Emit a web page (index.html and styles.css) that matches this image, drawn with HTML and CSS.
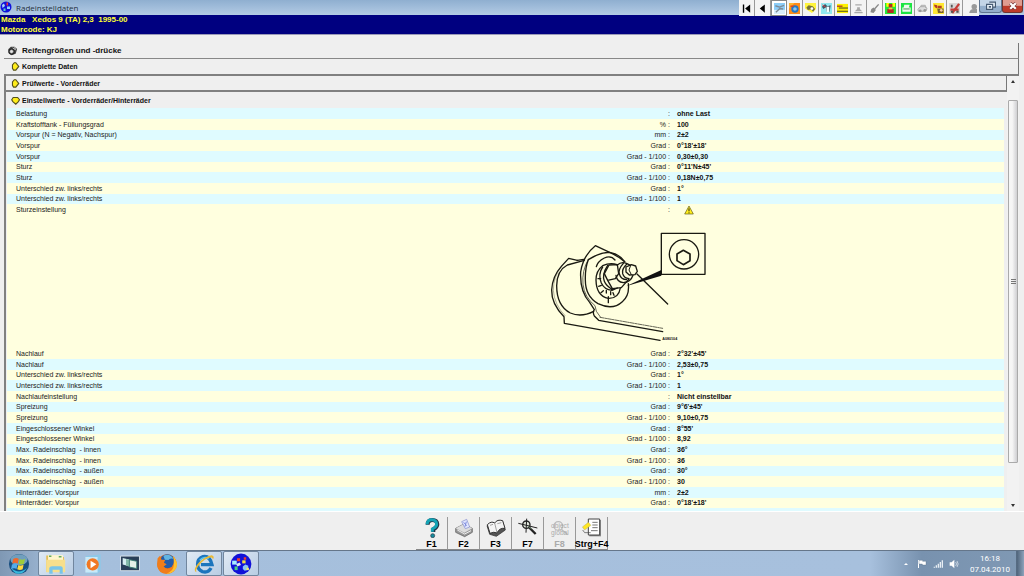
FILE: index.html
```html
<!DOCTYPE html>
<html lang="de">
<head>
<meta charset="utf-8">
<title>Radeinstelldaten</title>
<link rel="stylesheet" href="styles.css">
</head>
<body>
<div class="app">
<header class="titlebar">
  <svg class="appicon" viewBox="0 0 24 24"><circle cx="12" cy="12" r="11" fill="#1010dc"/><path d="M4 8l4-3 2 5-5 4z" fill="#a8d8f8"/><path d="M13 3h3v6h-3z" fill="#e33"/><path d="M14 11h6v5h-6z" fill="#8bd0ff"/><path d="M7 15h4v5h-4z" fill="#58d4c0"/></svg>
  <h1 class="title">Radeinstelldaten</h1>
  <nav class="tools" aria-label="Werkzeuge">
    <button class="tool" aria-label="Erste"><svg viewBox="0 0 24 24"><path d="M4 3h3v18H4zM20 3v18L9 12z" fill="#000"/></svg></button>
    <button class="tool" aria-label="Zurück"><svg viewBox="0 0 24 24"><path d="M17 3v18L6 12z" fill="#000"/></svg></button>
    <button class="tool tool-on" aria-label="Radeinstellung"><svg viewBox="0 0 24 24"><rect width="24" height="24" fill="#8ccdf8"/><path d="M0 15h24v9H0z" fill="#d9eefb"/><path d="M3 6l9 3 10-4M4 20l9-8 7 1" stroke="#7f8b96" stroke-width="3" fill="none"/></svg></button>
    <button class="tool" aria-label="Motor"><svg viewBox="0 0 24 24"><rect width="24" height="24" fill="#ff8b18"/><path d="M0 0h12L0 12z" fill="#ffb52f"/><circle cx="13" cy="13" r="8" fill="#2377c5"/><circle cx="13" cy="13" r="4" fill="#8fc5ef"/><path d="M3 7h7" stroke="#e43c16" stroke-width="3"/></svg></button>
    <button class="tool" aria-label="Fahrzeug"><svg viewBox="0 0 24 24"><path d="M0 0h24v13l-9 9L0 12z" fill="#fff43c"/><path d="M3 10l5-5 9 2 5 6-4 6-5-5-7 1z" fill="#77733c"/><circle cx="15" cy="12" r="3" fill="#fff"/></svg></button>
    <button class="tool" aria-label="Diagnose"><svg viewBox="0 0 24 24"><rect width="24" height="24" fill="#91e7ef"/><path d="M2 8l7-6 5 5 7-2-2 14h-7l-1-10-6 4z" fill="#3e5968"/><path d="M12 8h6v12h-6z" fill="#f2ffff"/><path d="M3 4l7 5" stroke="#e33" stroke-width="2"/></svg></button>
    <button class="tool" aria-label="Werte"><svg viewBox="0 0 24 24"><rect y="2" width="24" height="20" fill="#fff100"/><path d="M0 7h12" stroke="#b42" stroke-width="3"/><path d="M4 11h20M0 18h24" stroke="#38382c" stroke-width="2"/></svg></button>
    <button class="tool" aria-label="Hebebühne" disabled><svg viewBox="0 0 24 24"><path d="M5 4h14M3 21h18" stroke="#aaa" stroke-width="3"/><path d="M9 9h6v4l5 5H4l5-5z" fill="#aaa"/></svg></button>
    <button class="tool" aria-label="Wartung" disabled><svg viewBox="0 0 24 24"><path d="M21 3L12 13" stroke="#888" stroke-width="3"/><path d="M5 13l5-3 5 5-5 7-7-2z" fill="#888"/></svg></button>
    <button class="tool" aria-label="Elektrik"><svg viewBox="0 0 24 24"><rect width="24" height="24" fill="#25e83a"/><path d="M3 0h6v8H3zM16 0h6v8h-6z" fill="#ff0"/><path d="M8 2h8v8H8zM5 13h14v9H5z" fill="#b52b20"/><path d="M8 10h8v4H8z" fill="#fb4"/></svg></button>
    <button class="tool" aria-label="Drucken"><svg viewBox="0 0 24 24"><rect width="24" height="24" fill="#1ce542"/><path d="M7 4h12l-2 6h4v9H3v-9h3z" fill="#eefaee"/><path d="M5 13h14" stroke="#3c8a4c" stroke-width="2"/></svg></button>
    <button class="tool" aria-label="Auto" disabled><svg viewBox="0 0 24 24"><path d="M2 14l5-6h10l5 4-3 6H3zM8 9l1-4h9l2 6" stroke="#aaa" stroke-width="2" fill="#ddd"/><circle cx="7" cy="17" r="3" fill="#999"/><circle cx="17" cy="16" r="3" fill="#999"/></svg></button>
    <button class="tool" aria-label="Klima"><svg viewBox="0 0 24 24"><rect width="24" height="24" fill="#ffe832"/><path d="M2 3l7 2v7l-5-3zM10 6h9v5h-9z" fill="#b43d24"/><path d="M9 12h14v10H11z" fill="#78602b"/><circle cx="18" cy="16" r="3" fill="#f8cda5"/></svg></button>
    <button class="tool" aria-label="Karosserie"><svg viewBox="0 0 24 24"><rect width="24" height="24" fill="#d8d8d8"/><path d="M3 12h18v5H3z" fill="#c63c37"/><path d="M7 22L22 2" stroke="#c63c37" stroke-width="5"/><path d="M4 19h5M16 19h5M6 4v6" stroke="#555" stroke-width="4"/></svg></button>
    <button class="tool" aria-label="Benutzer" disabled><svg viewBox="0 0 24 24"><circle cx="18" cy="8" r="6" fill="#999"/><path d="M7 22q2-10 11-9h6v9z" fill="#999"/></svg></button>
  </nav>
  <button class="restore" aria-label="Wiederherstellen"><svg viewBox="0 0 24 18"><path d="M9 2h11v9h-5M4 6h11v9H4z" fill="#e9f1f9" stroke="#465a72" stroke-width="2"/><path d="M8 9h4v3H8z" fill="#465a72"/></svg></button>
  <button class="close" aria-label="Schließen"><svg viewBox="0 0 24 18"><path d="M7 4l10 10M17 4L7 14" stroke="#703030" stroke-width="6"/><path d="M7 4l10 10M17 4L7 14" stroke="#fff" stroke-width="4"/></svg></button>
</header>
<div class="vehicle"><p>Mazda &nbsp; Xedos 9 (TA) 2,3 &nbsp;1995-00</p><p>Motorcode: KJ</p></div>
<main class="main">
  <button class="section section-tyres"><svg class="mark" viewBox="0 0 27 27"><path d="M2 9l7-7h10l7 6-4 13-11 4-8-6z" fill="#444"/><circle cx="11" cy="15" r="7" fill="#aaa" stroke="#222" stroke-width="3"/><path d="M11 11v8M7 15h8M14 5l7 5M19 3l3 7" stroke="#eee" stroke-width="2"/></svg>Reifengrößen und -drücke</button>
  <button class="section section-deep"><svg class="mark" viewBox="0 0 27 27"><path class="gem" d="M13 2h4l8 10-8 10h-6l-3-5V8z"/></svg>Komplette Daten</button>
  <div class="scroller">
    <div class="sheet">
      <button class="section section-deep section-first"><svg class="mark" viewBox="0 0 27 27"><path class="gem" d="M13 2h4l8 10-8 10h-6l-3-5V8z"/></svg>Prüfwerte - Vorderräder</button>
      <button class="section section-open" aria-expanded="true"><svg class="mark" viewBox="0 0 27 27"><path class="gem" d="M10 4h12l5 6-3 5-7 7-8-7-3-5z"/></svg>Einstellwerte - Vorderräder/Hinterräder</button>
      <table class="data">
        <colgroup><col class="c-name"><col class="c-unit"><col></colgroup>
        <tbody>
          <tr><td>Belastung</td><td>:</td><td>ohne Last</td></tr>
          <tr><td>Kraftstofftank - Füllungsgrad</td><td>% :</td><td>100</td></tr>
          <tr><td>Vorspur (N = Negativ, Nachspur)</td><td>mm :</td><td>2±2</td></tr>
          <tr><td>Vorspur</td><td>Grad :</td><td>0°18'±18'</td></tr>
          <tr><td>Vorspur</td><td>Grad - 1/100 :</td><td>0,30±0,30</td></tr>
          <tr><td>Sturz</td><td>Grad :</td><td>0°11'N±45'</td></tr>
          <tr><td>Sturz</td><td>Grad - 1/100 :</td><td>0,18N±0,75</td></tr>
          <tr><td>Unterschied zw. links/rechts</td><td>Grad :</td><td>1°</td></tr>
          <tr><td>Unterschied zw. links/rechts</td><td>Grad - 1/100 :</td><td>1</td></tr>
          <tr><td>Sturzeinstellung</td><td>:</td><td><svg class="warn" viewBox="0 0 30 30"><path d="M15 3l13 24H2z" fill="#ffee19" stroke="#5c5718" stroke-width="2"/><path d="M15 10v9M15 22v3" stroke="#222" stroke-width="3"/></svg></td></tr>
        </tbody>
        <tbody class="figure"><tr><td colspan="3">
          <svg class="drawing" viewBox="0 60 540 384" role="img" aria-label="Sturzeinstellung Exzenter">
            <g fill="none" stroke="#1a1a12" stroke-width="4" stroke-linejoin="round" stroke-linecap="round">
              <rect x="364" y="100" width="131" height="123"/>
              <circle cx="432" cy="163" r="44"/>
              <path d="M430 151l20 11v20l-20 12-19-12v-20z" stroke-width="5"/>
              <path d="M112 181L86 175 64 199Q37 229 35 270q-1 42 37 80l1 20 287 51"/>
              <path d="M133 181l-51 14q-31 16-32 62 0 60 41 82 33 14 70-5"/>
              <path d="M65 199q-25 30-25 72 3 43 35 76" stroke-width="1"/>
              <path d="M112 181l19-3"/>
              <path d="M254 185q-20-17-45-28l-43-20q-37 30-44 79-3 58 27 91l14 22q-6 8 0 19l13 13 192 34"/>
              <path d="M145 178q-20 35-16 75 4 38 36 64 0 17 16 34" stroke-width="2"/>
              <path d="M180 352l188 33" stroke-width="2" stroke-dasharray="12 3 5 3"/>
              <path d="M145 179q33-22 64-22 29 5 45 28M145 179q-10 25-9 61 0 49 38 71 44 21 73-6 22-18 18-54"/>
              <path d="M225 180q-12-15-32-6-20 10-24 26"/>
              <path d="M231 194q-20-7-43 3-20 15-20 43 1 48 37 55 31 1 36-31"/>
              <path d="M188 201q-15 22-4 48 9 20 32 22l16-7M203 196q-18 28-10 48 6 15 25 25"/>
              <path d="M207 195l25-1 4 27-10 15-23 5-10-20zM203 241l14 25 27-3 22-25"/>
              <path d="M232 195q13-12 29-4l10 5M228 226q3 20 22 22 22-1 29-22"/>
              <path d="M250 190q-16 18-12 32 5 17 22 17M260 193q-15 14-12 28 4 14 19 15M258 201l16-7 13 4 5 16-7 10-17 1-10-9z"/>
              <path d="M272 196l-5 14 7 14" stroke-width="3"/>
              <path d="M291 222L383 312"/>
              <path d="M174 236h8M176 259l8-3M183 278l7-6M205 290v18M222 286l-3-8M199 279v-8M212 284v-9"/>
            </g>
            <path d="M258 259l106-49v17z" fill="#111"/>
            <text x="367" y="421" class="figno">A080104</text>
          </svg></td></tr></tbody>
        <tbody class="alt">
          <tr><td>Nachlauf</td><td>Grad :</td><td>2°32'±45'</td></tr>
          <tr><td>Nachlauf</td><td>Grad - 1/100 :</td><td>2,53±0,75</td></tr>
          <tr><td>Unterschied zw. links/rechts</td><td>Grad :</td><td>1°</td></tr>
          <tr><td>Unterschied zw. links/rechts</td><td>Grad - 1/100 :</td><td>1</td></tr>
          <tr><td>Nachlaufeinstellung</td><td>:</td><td>Nicht einstellbar</td></tr>
          <tr><td>Spreizung</td><td>Grad :</td><td>9°6'±45'</td></tr>
          <tr><td>Spreizung</td><td>Grad - 1/100 :</td><td>9,10±0,75</td></tr>
          <tr><td>Eingeschlossener Winkel</td><td>Grad :</td><td>8°55'</td></tr>
          <tr><td>Eingeschlossener Winkel</td><td>Grad - 1/100 :</td><td>8,92</td></tr>
          <tr><td>Max. Radeinschlag &nbsp;- innen</td><td>Grad :</td><td>36°</td></tr>
          <tr><td>Max. Radeinschlag &nbsp;- innen</td><td>Grad - 1/100 :</td><td>36</td></tr>
          <tr><td>Max. Radeinschlag &nbsp;- außen</td><td>Grad :</td><td>30°</td></tr>
          <tr><td>Max. Radeinschlag &nbsp;- außen</td><td>Grad - 1/100 :</td><td>30</td></tr>
          <tr><td>Hinterräder: Vorspur</td><td>mm :</td><td>2±2</td></tr>
          <tr><td>Hinterräder: Vorspur</td><td>Grad :</td><td>0°18'±18'</td></tr>
          <tr><td></td><td></td><td></td></tr>
        </tbody>
      </table>
    </div>
    <div class="scrollbar">
      <button class="arrow" aria-label="Nach oben"><svg viewBox="0 0 12 12"><path d="M4 7l2-3 2 3z" fill="#333"/></svg></button>
      <div class="track"><div class="thumb"><i></i><i></i><i></i></div></div>
      <button class="arrow" aria-label="Nach unten"><svg viewBox="0 0 12 12"><path d="M4 5l2 3 2-3z" fill="#333"/></svg></button>
    </div>
  </div>
</main>
<footer class="keys">
  <button class="key"><svg viewBox="0 0 60 60"><path d="M17 20Q17 6 31 6t15 13q0 9-12 15v8" fill="none" stroke="#234" stroke-width="12"/><path d="M15 19Q17 4 30 5t14 13q0 9-13 15v8" fill="none" stroke="#13a3b5" stroke-width="9"/><circle cx="32" cy="53" r="6" fill="#188c9d" stroke="#234" stroke-width="2"/></svg>F1</button>
  <button class="key"><svg viewBox="0 0 60 60"><path d="M5 31l25-13 25 13v12L32 56 5 43z" fill="#999" stroke="#555" stroke-width="2"/><path d="M5 31l25-13 25 13-24 13z" fill="#ddd"/><path d="M23 11l15-7 9 23-13 5z" fill="#e3e7ff" stroke="#8189ca" stroke-width="2"/><path d="M29 13l9 10M37 11l-4 15" stroke="#7a88dc" stroke-width="3"/><path d="M10 36l22 12 19-10" stroke="#eee" stroke-width="3" fill="none"/></svg>F2</button>
  <button class="key"><svg viewBox="0 0 60 60"><path d="M3 23l8 26 20 6 27-19-8-25z" fill="#555" stroke="#222" stroke-width="2"/><path d="M4 20q12-12 22-5 8-12 24-7l7 23q-17-2-24 14-9-5-21 1z" fill="#f4f4f4" stroke="#333" stroke-width="3"/><path d="M26 15l7 29M12 22l9-3M34 17l12-3" stroke="#777" stroke-width="2"/></svg>F3</button>
  <button class="key"><svg viewBox="0 0 60 60"><circle cx="25" cy="20" r="11" fill="#dde3d9" stroke="#222" stroke-width="4"/><path d="M1 16l57 14M26 2l-2 42" stroke="#222" stroke-width="3"/><path d="M32 27l21 21" stroke="#222" stroke-width="7"/><path d="M30 25l12 8" stroke="#698069" stroke-width="3"/></svg>F7</button>
  <button class="key" disabled><svg viewBox="0 0 60 60"><circle cx="25" cy="24" r="13" fill="none" stroke="#bbb" stroke-width="4"/><path d="M34 34l19 16" stroke="#bbb" stroke-width="4"/><text x="3" y="29" class="ghost">object</text><text x="3" y="51" class="ghost">global</text></svg>F8</button>
  <button class="key"><svg viewBox="0 0 60 60"><path d="M22 6h35v49H22z" fill="#888"/><path d="M19 3h34v48H19z" fill="#fff" stroke="#444" stroke-width="3"/><path d="M31 13h16M31 21h16M31 29h16M27 38h20" stroke="#777" stroke-width="3"/><path d="M1 27l18-14 8 9-19 14z" fill="#ffe622" stroke="#997" stroke-width="1"/><path d="M2 36l6 8h18" stroke="#444" stroke-width="2" fill="none"/></svg>Strg+F4</button>
</footer>
<nav class="taskbar" aria-label="Taskleiste">
  <button class="task" aria-label="Start"><svg viewBox="0 0 72 72"><circle cx="36" cy="36" r="33" fill="#195080"/><ellipse cx="36" cy="22" rx="28" ry="18" fill="#719fbd"/><path d="M10 48q26 25 52 0-10 19-26 20T10 48" fill="#37b9dd"/><path d="M17 20q9-6 18-1l-3 15q-9-4-18 1z" fill="#ef682c"/><path d="M38 20q9 5 18-1l-4 16q-9 5-17 0z" fill="#9dcc39"/><path d="M13 38q9-5 18-1l-3 15q-9-4-18 1z" fill="#52aceb"/><path d="M34 39q9 5 17-1l-3 15q-9 5-18 0z" fill="#ffd93f"/></svg></button>
  <button class="task task-on" aria-label="Explorer"><svg viewBox="0 0 72 72"><path d="M4 8h21l5 5h32v48H4z" fill="#e6bf58"/><path d="M10 7h49v20H10z" fill="#fff6cd"/><path d="M13 8h8v5h-8zM45 10h9v5h-9z" fill="#63aa62"/><path d="M4 22h62v41H4z" fill="#f7df8c"/><path d="M14 68V49q1-6 9-6h28q7 0 7 6v19H48V55H25v13z" fill="#79c5e9"/></svg></button>
  <button class="task" aria-label="Media Player"><svg viewBox="0 0 72 72"><path d="M13 10l48-5v55l-12 8-36-3z" fill="#8dc9e9"/><path d="M11 13h40v51H11z" fill="#c9e9f8"/><circle cx="35" cy="37" r="20" fill="#f17823"/><path d="M28 25l19 12-19 13z" fill="#fff"/></svg></button>
  <button class="task" aria-label="Flip 3D"><svg viewBox="0 0 72 72"><path d="M5 10h62v48H5z" fill="#293f58" stroke="#dce6ef" stroke-width="3"/><path d="M12 16l21 5v22l-21-5z" fill="#d5edf0"/><path d="M23 20l21 5v22l-21-5z" fill="#84baa9"/><path d="M34 22l24 5v24l-24-5z" fill="#e4f0e8" stroke="#397d72" stroke-width="3"/></svg></button>
  <button class="task" aria-label="Firefox"><svg viewBox="0 0 72 72"><circle cx="36" cy="36" r="32" fill="#e66c19"/><circle cx="37" cy="27" r="23" fill="#235caa"/><path d="M24 9q22-9 33 10-13-3-16 4l-12-1z" fill="#61b4e2"/><path d="M5 18l8-9 5 13 12 1-4 9 9 5-10 7q9 12 20 6 17-9 13-38 14 20 6 38-9 18-30 18Q9 67 4 43z" fill="#f07d1a"/><path d="M56 10q22 26 6 46-12 13-28 12 23-8 24-27 2-14-2-31" fill="#ffc12c"/></svg></button>
  <button class="task task-on" aria-label="Internet Explorer"><svg viewBox="0 0 72 72"><path d="M59 49Q50 66 31 61 15 55 15 37t18-25q22-4 29 26H26" fill="none" stroke="#1c75bd" stroke-width="11"/><path d="M22 24q14-15 29-5" fill="none" stroke="#5ac6ef" stroke-width="5"/><path d="M12 63Q-3 58 18 33 41 9 61 7q12 3 3 17 3-12-8-9-19 5-36 24-14 18-8 24" fill="#e9b935"/></svg></button>
  <button class="task task-on" aria-label="Radeinstelldaten"><svg viewBox="0 0 72 72"><circle cx="36" cy="36" r="34" fill="#1111d8"/><path d="M7 25h15v13H7z" fill="#a8ecff"/><path d="M23 17h10v10H23zM45 14h8v8h-8z" fill="#ef3e32"/><path d="M40 24h11v10H40z" fill="#f6de42"/><path d="M20 36l12-5 4 8-12 5z" fill="#d8e4f4"/><path d="M15 44h10v12H15z" fill="#49d280"/><path d="M42 44l8-6 10 4-2 14-10 2-6-6z" fill="#8cc6f4"/><path d="M54 48h8v8h-8z" fill="#efe66c"/></svg></button>
  <div class="tray">
    <svg viewBox="0 0 30 30"><path d="M9 18l6-6 6 6z" fill="#fff"/></svg>
    <svg viewBox="0 0 30 30"><path d="M3 3h3v24H3z" fill="#fff"/><path d="M6 4h11v3h10v11H16v-3H6z" fill="#fff" stroke="#526b84"/></svg>
    <svg viewBox="0 0 30 30"><path d="M2 23h4v3H2zM8 19h4v7H8zM14 14h4v12h-4zM20 9h4v17h-4zM26 4h4v22h-4z" fill="#e8eef4"/></svg>
    <svg viewBox="0 0 30 30"><path d="M2 10h6l8-8v26l-8-8H2z" fill="#fff"/><path d="M20 9q5 6 0 12M24 6q7 9 0 18" fill="none" stroke="#eef3f8" stroke-width="2"/></svg>
  </div>
  <div class="clock"><time>16:18</time><time>07.04.2010</time></div>
  <button class="desktop" aria-label="Desktop anzeigen"></button>
</nav>
</div>
</body>
</html>
```
FILE: styles.css
```css
* { box-sizing: border-box; }
body { margin: 0; background: #efefef; color: #222; font: 7px/10px "Liberation Sans", Arial, sans-serif; }
button { margin: 0; padding: 0; border: 0; background: none; color: inherit; font: inherit; }
svg { display: block; flex: none; }
p, h1 { margin: 0; }
.app { display: flex; flex-direction: column; height: 100vh; overflow: hidden; }

.titlebar { display: flex; flex: none; height: 15px; background: linear-gradient(#8fafd0, #b3cbe5); }
.appicon { width: 12px; height: 12px; margin: 1px 4px 0 0; }
.title { flex: 1; font: 8px/15px "Open Sans", "Noto Sans", sans-serif; color: #24303c; }
.tools { display: flex; height: 16px; background: #f4f4f4; position: relative; }
.tool { display: grid; place-items: center; width: 16px; border-right: 1px solid #999; }
.tool:last-child { border: 0; }
.tool-on { background: #fff; border: 1px solid #888; }
.tool svg { width: 11px; height: 11px; }
.restore, .close { display: grid; place-items: center; height: 13px; border: 1px solid #60758f; border-top: 0; border-radius: 0 0 3px 3px; }
.restore { width: 23px; background: linear-gradient(#c4d5e7 45%, #94aecb 50%); }
.close { width: 21px; margin-right: 1px; background: linear-gradient(#df9c90 45%, #bd3b2a 50%); border-color: #70352f; }
.restore svg, .close svg { width: 14px; height: 10px; }

.vehicle { flex: none; height: 20px; padding-left: 1px; border-bottom: 1px solid #9a9ab8; background: #000080; color: #ff3; font: bold 8px/10px "Liberation Sans", Arial, sans-serif; }

.main { display: flex; flex: 1; flex-direction: column; min-height: 0; padding: 8px 5px 0 4px; }
.section { display: flex; flex: none; align-items: center; gap: 2px; width: 100%; height: 16px; padding: 1px 0 0 5px; border-right: 1px solid #777; border-bottom: 1px solid #888; color: #111; font-weight: bold; text-align: left; }
.section-tyres { padding-left: 3px; gap: 4px; font-size: 8px; }
.section-deep { height: 17px; border-bottom: 2px solid #808080; }
.mark { width: 11px; height: 10px; }
.gem { fill: #ffed1b; stroke: #55521c; stroke-width: 3; }
.section-first { height: 16px; padding-left: 3px; }
.section-open { padding-left: 3px; border: 0; }
.scroller { display: flex; flex: 1; min-height: 0; }
.sheet { flex: 1; min-width: 0; overflow: hidden; border-left: 2px solid #808080; }

.data { width: calc(100% - 4px); margin-left: 1px; border-collapse: collapse; table-layout: fixed; }
.c-name { width: 50%; }
.c-unit { width: 17%; }
.data td { height: 11px; padding: 0 5px 0 9px; line-height: 10px; white-space: nowrap; }
.data tr:nth-child(3n) td { height: 10px; }
.data td:nth-child(2) { text-align: right; }
.data td:nth-child(3) { padding-left: 2px; color: #111; font-weight: bold; }
.data tr { background: #ffffdf; }
.data tr:nth-child(odd) { background: #dffbff; }
.alt tr:nth-child(odd) { background: #ffffdf; }
.alt tr:nth-child(even) { background: #dffbff; }
.figure tr:nth-child(odd) { background: #ffffdf; }
.figure tr td { height: 133px; padding: 4px 0 0 53%; }
.drawing { width: 180px; height: 128px; margin-left: 5px; }
.figno { font: bold 11px "Liberation Sans", Arial, sans-serif; fill: #111; }
.warn { width: 10px; height: 10px; margin-left: 7px; }

.scrollbar { display: flex; flex: none; flex-direction: column; width: 12px; background: #f2f2f2; }
.arrow { height: 12px; }
.arrow svg { width: 12px; height: 12px; }
.track { flex: 1; padding: 12px 1px 36px; }
.thumb { display: flex; flex-direction: column; align-items: center; justify-content: center; gap: 1px; height: 100%; border: 1px solid #aaa; border-radius: 1px; background: linear-gradient(90deg, #f6f6f6 40%, #cfcfd2); }
.thumb i { width: 5px; height: 1px; background: #777; }

.keys { display: flex; flex: none; justify-content: center; height: 39px; padding-top: 5px; border-top: 1px solid #fff; }
.key { display: flex; flex-direction: column; align-items: center; justify-content: space-between; width: 32px; height: 33px; border-right: 1px solid #999; border-bottom: 1px solid #888; color: #000; font: bold 9px/10px "Liberation Sans", Arial, sans-serif; white-space: nowrap; }
.key:disabled { color: #aaa; }
.key svg { width: 20px; height: 20px; margin-top: 1px; }
.ghost { font: 20px "Liberation Sans", Arial, sans-serif; fill: #aaa; }

.taskbar { display: flex; flex: none; height: 26px; border-top: 1px solid #65768a; background: linear-gradient(90deg, #7f98b4, #a5bfdc 6%, #a7c0dd 85%, #7892af 90%, #8099b4); }
.task { display: grid; place-items: center; width: 36px; margin-left: 1px; border-radius: 2px; }
.task svg { width: 22px; height: 22px; }
.task-on { border: 1px solid #71869e; background: linear-gradient(135deg, #e0eaf5, #b9cde3); }
.tray { display: flex; align-items: center; gap: 6px; margin-left: auto; }
.tray svg { width: 10px; height: 10px; }
.clock { display: flex; flex-direction: column; align-items: center; width: 52px; margin-left: 5px; color: #fff; font: 8px/11px Roboto, "Noto Sans", sans-serif; padding-top: 2px; }
.desktop { width: 8px; border-left: 1px solid #566b82; background: linear-gradient(90deg, #50657c, #8da3bb); }
```
